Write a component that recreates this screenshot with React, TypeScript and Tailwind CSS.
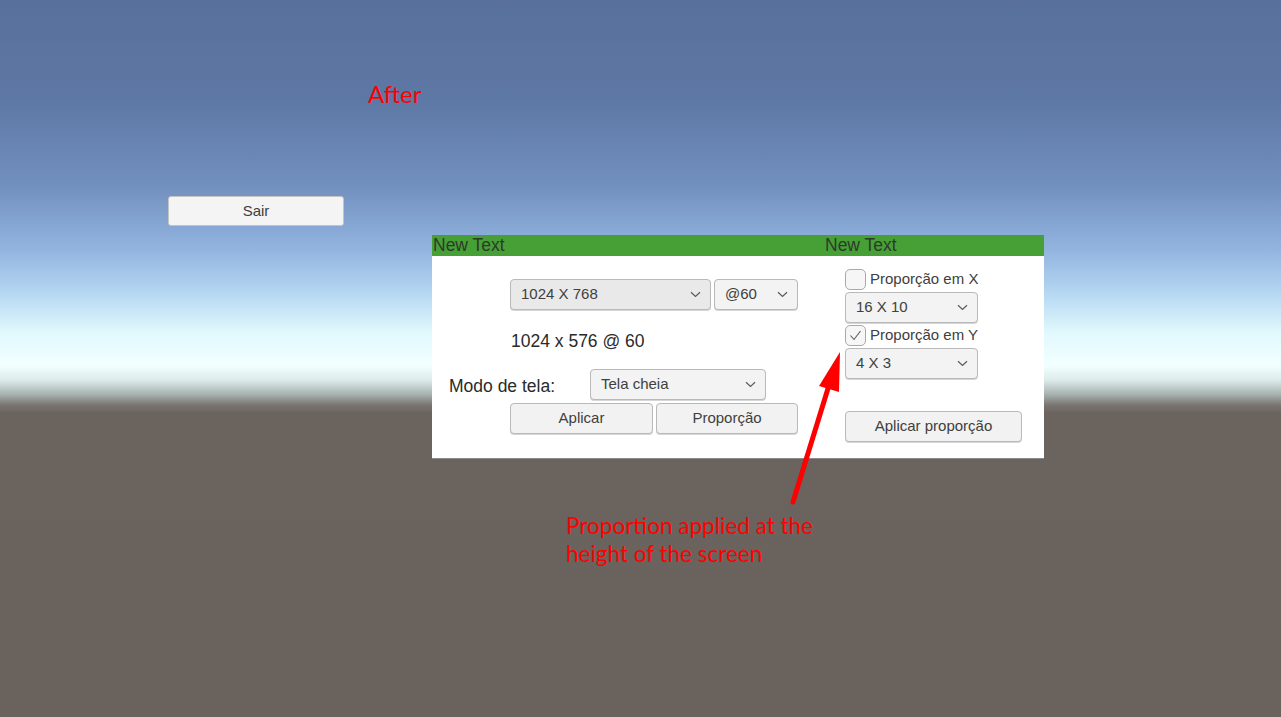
import React from "react"

// Unity-style UI: resolution settings panel over a default skybox

const ui = { fontFamily: '"Liberation Sans", Arial, sans-serif' }
const note = { fontFamily: 'Lato, "Open Sans", sans-serif' }

function Chevron() {
  return (
    <svg width="11" height="7" viewBox="0 0 11 7" className="shrink-0">
      <path d="M1 1.2l4.5 4.3 4.5-4.3" fill="none" stroke="#5a5a5a" strokeWidth="1.2" />
    </svg>
  )
}

function Dropdown({ label, w, dark }: { label: string; w: string; dark?: boolean }) {
  return (
    <div
      className={`${w} h-[31px] flex items-center justify-between pl-[10px] pr-[9px] rounded-[4px] border border-[#b9b9b9] shadow-[0_1px_0_#d6d6d6] text-[15px] text-[#404040] ${
        dark ? "bg-[#e9e9e9]" : "bg-[#f3f3f3]"
      }`}
    >
      <span>{label}</span>
      <Chevron />
    </div>
  )
}

function Button({ label, w }: { label: string; w: string }) {
  return (
    <div
      className={`${w} h-[31px] flex items-center justify-center rounded-[4px] border border-[#b9b9b9] shadow-[0_1px_0_#d6d6d6] bg-[#f2f2f2] text-[15px] text-[#404040]`}
    >
      {label}
    </div>
  )
}

function Checkbox({ label, checked }: { label: string; checked?: boolean }) {
  return (
    <div className="h-[21px] flex items-center gap-[4px]">
      <div className="w-[21px] h-[21px] rounded-[5px] border border-[#a9a9a9] bg-[#f6f6f6] flex items-center justify-center">
        {checked && (
          <svg width="13" height="11" viewBox="0 0 13 11">
            <path d="M1.5 5.5l3.5 4 6.5-8.5" fill="none" stroke="#5a5a5a" strokeWidth="1.1" />
          </svg>
        )}
      </div>
      <span className="text-[15px] text-[#404040] leading-none -mt-[2px]">{label}</span>
    </div>
  )
}

export default function App() {
  return (
    <div
      className="relative w-[1281px] h-[717px] overflow-hidden bg-[linear-gradient(180deg,#58709b_0%,#5e78a5_14%,#7290be_26%,#93b5e0_35%,#b6d8f2_41%,#e2f9fd_46.5%,#f2ffff_51%,#dcebeb_53%,#a7b2b0_55%,#7a7570_56.5%,#6b635e_57.6%,#6a625c_100%)]"
      style={ui}
    >
      {/* Annotation */}
      <div className="pt-[79px] pl-[368px] text-[24px] leading-[29px] text-[#ff0000]" style={note}>
        After
      </div>

      {/* Sair */}
      <div className="mt-[88px] ml-[168px] w-[176px] h-[30px] flex items-center justify-center rounded-[3px] border border-[#c4c4c4] bg-[#f4f4f4] text-[15px] text-[#404040]">
        Sair
      </div>

      {/* Panel */}
      <div className="mt-[9px] ml-[432px] w-[612px]">
        <div className="h-[21px] bg-[#47a036] flex items-center text-[17.5px] text-[#2c3b2a] leading-none">
          <span className="w-[393px] pl-[1px]">New Text</span>
          <span>New Text</span>
        </div>
        <div className="h-[203px] bg-white border-b border-[#8a8a8a] flex">
          {/* Left */}
          <div className="w-[413px] pt-[23px]">
            <div className="pl-[78px] flex gap-[3px]">
              <Dropdown label="1024 X 768" w="w-[201px]" dark />
              <Dropdown label="@60" w="w-[84px]" />
            </div>
            <div className="mt-[21px] pl-[79px] h-[20px] leading-[20px] text-[17.5px] text-[#2a2a2a]">
              1024 x 576 @ 60
            </div>
            <div className="mt-[18px] flex items-center">
              <span className="w-[158px] pl-[17px] pt-[3px] text-[17.5px] text-[#2a2a2a]">Modo de tela:</span>
              <Dropdown label="Tela cheia" w="w-[176px]" />
            </div>
            <div className="mt-[3px] pl-[78px] flex gap-[3px]">
              <Button label="Aplicar" w="w-[143px]" />
              <Button label="Proporção" w="w-[142px]" />
            </div>
          </div>

          {/* Right */}
          <div className="pt-[13px] flex flex-col">
            <Checkbox label="Proporção em X" />
            <div className="mt-[2px]">
              <Dropdown label="16 X 10" w="w-[133px]" />
            </div>
            <div className="mt-[2px]">
              <Checkbox label="Proporção em Y" checked />
            </div>
            <div className="mt-[2px]">
              <Dropdown label="4 X 3" w="w-[133px]" />
            </div>
            <div className="mt-[32px]">
              <Button label="Aplicar proporção" w="w-[177px]" />
            </div>
          </div>
        </div>
      </div>

      {/* Annotation text */}
      <div className="mt-[53px] ml-[566px] text-[22.5px] leading-[28px] text-[#ff0000]" style={note}>
        <div>Proportion applied at the</div>
        <div>height of the screen</div>
      </div>

      {/* Arrow overlay */}
      <svg className="absolute left-0 top-0 pointer-events-none" width="1281" height="717">
        <line x1="793" y1="502" x2="830" y2="382" stroke="#ff0000" strokeWidth="5" strokeLinecap="round" />
        <polygon points="840,352 819,386 839,392" fill="#ff0000" />
      </svg>
    </div>
  )
}
